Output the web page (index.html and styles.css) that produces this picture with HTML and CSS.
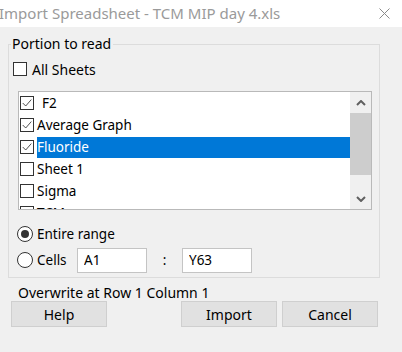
FILE: index.html
```html
<!DOCTYPE html>
<html lang="en">
  <head>
    <meta charset="UTF-8" />
    <title>Import Spreadsheet</title>
    <link rel="stylesheet" href="styles.css">
  </head>
  <body>
    <div class="titlebar">
      <span class="title">Import Spreadsheet - TCM MIP day 4.xls</span>
      <svg class="close" width="11" height="11" viewBox="0 0 11 11">
        <path d="M0.5 0.5 L10.5 10.5 M10.5 0.5 L0.5 10.5" stroke="#8a8a8a" stroke-width="1" fill="none" />
      </svg>
    </div>

    <div class="dialog">
      <fieldset class="group">
        <legend>Portion to read</legend>

        <label class="check-row all-sheets">
          <span class="box"></span>All Sheets
        </label>

        <div class="listbox">
          <div class="items">
            <div class="item">
              <span class="box checked"><svg width="14" height="14" viewBox="0 0 14 14"><polyline points="2,7 5.5,10.5 12,3" /></svg></span>
              <span class="name spaced">F2</span>
            </div>
            <div class="item">
              <span class="box checked"><svg width="14" height="14" viewBox="0 0 14 14"><polyline points="2,7 5.5,10.5 12,3" /></svg></span>
              <span class="name">Average Graph</span>
            </div>
            <div class="item">
              <span class="box checked"><svg width="14" height="14" viewBox="0 0 14 14"><polyline points="2,7 5.5,10.5 12,3" /></svg></span>
              <span class="name selected">Fluoride</span>
            </div>
            <div class="item">
              <span class="box"></span>
              <span class="name">Sheet 1</span>
            </div>
            <div class="item">
              <span class="box"></span>
              <span class="name">Sigma</span>
            </div>
            <div class="item">
              <span class="box"></span>
              <span class="name">TCM</span>
            </div>
          </div>
          <div class="scrollbar">
            <div class="arrow">
              <svg width="10" height="6" viewBox="0 0 10 6"><polyline points="1,5 5,1 9,5" /></svg>
            </div>
            <div class="thumb"></div>
            <div class="track"></div>
            <div class="arrow">
              <svg width="10" height="6" viewBox="0 0 10 6"><polyline points="1,1 5,5 9,1" /></svg>
            </div>
          </div>
        </div>

        <label class="radio-row first">
          <span class="radio on"></span>Entire range
        </label>
        <div class="radio-row">
          <span class="radio"></span>
          <span class="cells-label">Cells</span>
          <input class="cell" type="text" value="A1" />
          <span class="colon">:</span>
          <input class="cell" type="text" value="Y63" />
        </div>
      </fieldset>

      <p class="overwrite">Overwrite at Row 1 Column 1</p>

      <div class="buttons">
        <button class="btn">Help</button>
        <span class="spacer"></span>
        <button class="btn">Import</button>
        <button class="btn">Cancel</button>
      </div>
    </div>
  </body>
</html>
```

FILE: styles.css
```css
body {
  margin: 0;
  width: 402px;
  height: 352px;
  overflow: hidden;
  font-family: 'Noto Sans', 'Open Sans', sans-serif;
  font-size: 13.5px;
  color: #000;
  background-color: #f0f0f0;
}
.titlebar {
  height: 27px;
  background-color: #fff;
  display: flex;
  align-items: center;
  justify-content: space-between;
}
.title {
  font-size: 15px;
  color: #9a9a9a;
  margin-left: -1px;
  margin-top: -1px;
}
.close {
  margin-right: 12px;
}
.dialog {
  padding: 8px 0 0 8px;
}
.group {
  width: 372px;
  height: 243px;
  margin: 0;
  padding: 0;
  border: 1px solid #dcdcdc;
  box-sizing: border-box;
}
.group legend {
  padding: 0 2px 0 1px;
  margin-left: 2px;
  line-height: 18px;
  font-size: 14px;
}
.check-row {
  display: flex;
  align-items: center;
  height: 20px;
  margin: 6px 0 0 4px;
  font-size: 14px;
}
.box {
  width: 13px;
  height: 13px;
  border: 1px solid #333;
  background-color: #fff;
  box-sizing: border-box;
  flex: none;
  display: flex;
  align-items: center;
  justify-content: center;
}
.all-sheets .box {
  width: 14px;
  height: 14px;
  margin-right: 5px;
}
.box svg polyline {
  fill: none;
  stroke: #333;
  stroke-width: 1;
}
.listbox {
  width: 354px;
  height: 119px;
  margin: 12px 0 0 9px;
  border: 1px solid #b9b9b9;
  box-sizing: border-box;
  background-color: #fff;
  display: flex;
  overflow: hidden;
}
.items {
  flex: 1;
  padding-left: 1px;
}
.item {
  height: 22px;
  display: flex;
  align-items: center;
}
.item .box {
  width: 14px;
  height: 14px;
  margin-right: 3px;
}
.name {
  flex: 1;
  height: 21px;
  line-height: 21px;
}
.name.spaced {
  padding-left: 5px;
}
.name.selected {
  background-color: #0078d7;
  color: #fff;
}
.scrollbar {
  width: 21px;
  background-color: #f0f0f0;
  display: flex;
  flex-direction: column;
  align-items: center;
}
.arrow {
  height: 21px;
  width: 100%;
  display: flex;
  align-items: center;
  justify-content: center;
}
.arrow svg polyline {
  fill: none;
  stroke: #606060;
  stroke-width: 2;
}
.thumb {
  width: 21px;
  height: 62px;
  background-color: #cdcdcd;
}
.track {
  flex: 1;
}
.radio-row {
  display: flex;
  align-items: center;
  height: 26px;
  margin-left: 8px;
}
.radio-row.first {
  margin-top: 11px;
}
.radio {
  width: 16px;
  height: 16px;
  border: 1px solid #333;
  border-radius: 50%;
  background-color: #fff;
  box-sizing: border-box;
  margin-right: 4px;
  flex: none;
  display: flex;
  align-items: center;
  justify-content: center;
}
.radio.on::after {
  content: "";
  width: 8px;
  height: 8px;
  border-radius: 50%;
  background-color: #333;
}
.cells-label {
  width: 40px;
}
.cell {
  width: 70px;
  height: 25px;
  box-sizing: border-box;
  border: 1px solid #c4c4c4;
  padding: 0 6px;
  font-family: inherit;
  font-size: 13.5px;
  color: #000;
  outline: none;
}
.colon {
  width: 35px;
  text-align: center;
}
.overwrite {
  margin: 7px 0 0 10px;
  line-height: 16px;
  font-size: 14px;
}
.buttons {
  display: flex;
  gap: 5px;
  margin-top: 0;
  padding-left: 3px;
  width: 367px;
}
.spacer {
  flex: 1;
}
.btn {
  width: 96px;
  height: 26px;
  border: 1px solid #cfcfcf;
  background-color: #e1e1e1;
  font-family: inherit;
  font-size: 14px;
  color: #000;
  padding: 0;
}
```
